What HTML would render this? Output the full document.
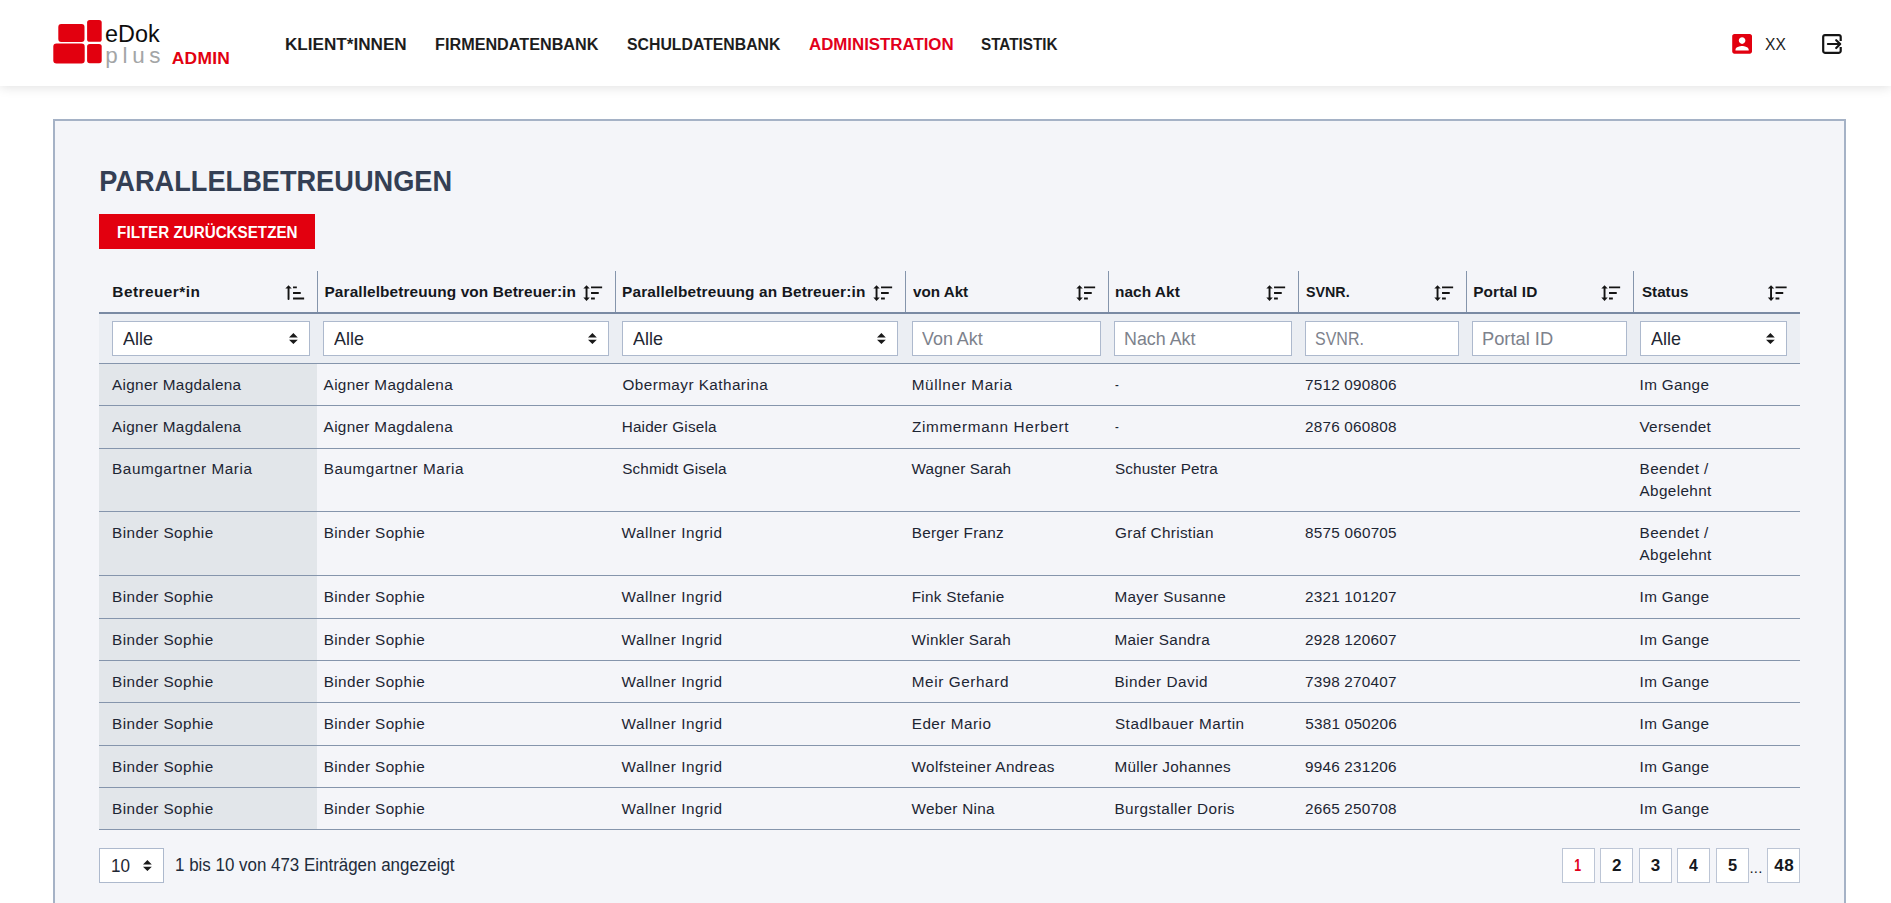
<!DOCTYPE html>
<html lang="de">
<head>
<meta charset="utf-8">
<title>eDok plus ADMIN – Parallelbetreuungen</title>
<style>
*{box-sizing:border-box}
html,body{margin:0;padding:0}
html{width:1891px;height:903px;overflow:hidden;background:#fff}
body{width:1891px;height:903px;overflow:hidden;background:#fff;position:relative;font-family:"Liberation Sans",sans-serif}
.abs{position:absolute}
.t{position:absolute;white-space:nowrap;margin:0;padding:0}
#hdr{position:absolute;left:0;top:0;width:1891px;height:86px;background:#fff;box-shadow:0 1px 11px rgba(0,0,0,.13)}
.lg{position:absolute;background:#e2000f}
#panel{position:absolute;left:53px;top:119px;width:1793px;height:784px;border:2px solid #a5b2c6;border-bottom:0;background:#f4f5f9}
#btn{position:absolute;left:99px;top:214px;width:216px;height:35px;background:#e2000f}
.vs{position:absolute;top:271px;height:42px;width:1px;background:#8595ac}
#thick{position:absolute;left:99px;top:312px;width:1701px;height:2px;background:#7a8aa3}
#frow{position:absolute;left:99px;top:314px;width:1701px;height:49px;background:#ebeef3}
#sorted{position:absolute;left:99px;top:364px;width:218px;height:465px;background:#e2e6ea}
.hl{position:absolute;left:99px;width:1701px;height:1px;background:#8595ac}
.inp{position:absolute;top:321px;height:35px;background:#fff;border:1px solid #adb9cd}
.car{position:absolute;width:8.8px;height:11.1px}
.si{position:absolute;top:285px;width:21px;height:16px}
.pb{position:absolute;top:848px;height:35px;background:#fff;border:1px solid #bcc5d5}
.pg{position:absolute;top:848px;height:35px;line-height:35px;text-align:center;font-size:15.6px;font-weight:700}
</style>
</head>
<body>
<div id="hdr"></div>
<!-- logo -->
<svg class="abs" style="left:50px;top:18px" width="56" height="48" viewBox="50 18 56 48"><g fill="#e2000f"><rect x="58.3" y="24" width="26.2" height="17.9" rx="2.9"/><rect x="87.1" y="20" width="14.6" height="21.8" rx="2.6"/><rect x="53.3" y="43.6" width="31.4" height="19.9" rx="3.2"/><rect x="87.1" y="43.9" width="14.6" height="19.3" rx="2.6"/></g></svg>
<!-- user icon -->
<svg class="abs" style="left:1728px;top:30px" width="28" height="28" viewBox="0 0 28 28"><g transform="translate(0.9 0.7) scale(1.1)"><path fill="#e2000f" d="M3 5v14c0 1.1.89 2 2 2h14c1.1 0 2-.9 2-2V5c0-1.1-.9-2-2-2H5c-1.11 0-2 .9-2 2zm12 4c0 1.66-1.34 3-3 3s-3-1.34-3-3 1.34-3 3-3 3 1.34 3 3zm-9 8c0-2 4-3.1 6-3.1s6 1.1 6 3.1v1H6v-1z"/></g></svg>
<!-- logout icon -->
<svg class="abs" style="left:1822px;top:34px" width="20" height="20" viewBox="0 0 20 20" fill="none" stroke="#141414" stroke-width="2.2" stroke-linejoin="round"><path stroke-linecap="butt" d="M18.7 6.9V2.8a1.7 1.7 0 0 0-1.7-1.7H2.9a1.7 1.7 0 0 0-1.7 1.7v14.3a1.7 1.7 0 0 0 1.7 1.7H17a1.7 1.7 0 0 0 1.7-1.7v-4"/><path stroke-linecap="round" d="M5.9 10h11.6M14.2 6.2l4 3.8-4 4"/></svg>

<div id="panel"></div>
<div id="btn"></div>

<!-- table chrome -->
<div class="vs" style="left:317px"></div>
<div class="vs" style="left:615px"></div>
<div class="vs" style="left:905px"></div>
<div class="vs" style="left:1108px"></div>
<div class="vs" style="left:1298px"></div>
<div class="vs" style="left:1466px"></div>
<div class="vs" style="left:1633px"></div>
<div id="frow"></div>
<div id="thick"></div>
<div id="sorted"></div>
<div class="hl" style="top:363px"></div>
<div class="hl" style="top:405px"></div>
<div class="hl" style="top:448px"></div>
<div class="hl" style="top:511px"></div>
<div class="hl" style="top:575px"></div>
<div class="hl" style="top:618px"></div>
<div class="hl" style="top:660px"></div>
<div class="hl" style="top:702px"></div>
<div class="hl" style="top:745px"></div>
<div class="hl" style="top:787px"></div>
<div class="hl" style="top:829px"></div>


<!-- sort icons -->
<svg class="si" style="left:285px" viewBox="0 0 21 16"><g transform="translate(0.34 0)"><g fill="#141414" stroke="none"><path d="M3.2 0.2L0 3.6h6.4z"/><rect x="2.25" y="2.5" width="1.9" height="12.4" rx=".9"/></g><g stroke="#141414" stroke-width="1.9" stroke-linecap="butt"><path d="M7.7 2.4H11.5M7.7 8H15.4M7.7 13.5H18.8"/></g></g></svg>
<svg class="si" style="left:583px" viewBox="0 0 21 16"><g transform="translate(0.34 0)"><g fill="#141414" stroke="none"><path d="M3.2 0.2L0 3.6h6.4z"/><path d="M3.2 15.9L0 12.4h6.4z"/><rect x="2.25" y="2.5" width="1.9" height="11"/></g><g stroke="#141414" stroke-width="1.9" stroke-linecap="butt"><path d="M7.7 2.4H18.8M7.7 8H15.4M7.7 13.5H11.5"/></g></g></svg>
<svg class="si" style="left:873px" viewBox="0 0 21 16"><g transform="translate(0.34 0)"><g fill="#141414" stroke="none"><path d="M3.2 0.2L0 3.6h6.4z"/><path d="M3.2 15.9L0 12.4h6.4z"/><rect x="2.25" y="2.5" width="1.9" height="11"/></g><g stroke="#141414" stroke-width="1.9" stroke-linecap="butt"><path d="M7.7 2.4H18.8M7.7 8H15.4M7.7 13.5H11.5"/></g></g></svg>
<svg class="si" style="left:1076px" viewBox="0 0 21 16"><g transform="translate(0.34 0)"><g fill="#141414" stroke="none"><path d="M3.2 0.2L0 3.6h6.4z"/><path d="M3.2 15.9L0 12.4h6.4z"/><rect x="2.25" y="2.5" width="1.9" height="11"/></g><g stroke="#141414" stroke-width="1.9" stroke-linecap="butt"><path d="M7.7 2.4H18.8M7.7 8H15.4M7.7 13.5H11.5"/></g></g></svg>
<svg class="si" style="left:1266px" viewBox="0 0 21 16"><g transform="translate(0.34 0)"><g fill="#141414" stroke="none"><path d="M3.2 0.2L0 3.6h6.4z"/><path d="M3.2 15.9L0 12.4h6.4z"/><rect x="2.25" y="2.5" width="1.9" height="11"/></g><g stroke="#141414" stroke-width="1.9" stroke-linecap="butt"><path d="M7.7 2.4H18.8M7.7 8H15.4M7.7 13.5H11.5"/></g></g></svg>
<svg class="si" style="left:1434px" viewBox="0 0 21 16"><g transform="translate(0.34 0)"><g fill="#141414" stroke="none"><path d="M3.2 0.2L0 3.6h6.4z"/><path d="M3.2 15.9L0 12.4h6.4z"/><rect x="2.25" y="2.5" width="1.9" height="11"/></g><g stroke="#141414" stroke-width="1.9" stroke-linecap="butt"><path d="M7.7 2.4H18.8M7.7 8H15.4M7.7 13.5H11.5"/></g></g></svg>
<svg class="si" style="left:1601px" viewBox="0 0 21 16"><g transform="translate(0.34 0)"><g fill="#141414" stroke="none"><path d="M3.2 0.2L0 3.6h6.4z"/><path d="M3.2 15.9L0 12.4h6.4z"/><rect x="2.25" y="2.5" width="1.9" height="11"/></g><g stroke="#141414" stroke-width="1.9" stroke-linecap="butt"><path d="M7.7 2.4H18.8M7.7 8H15.4M7.7 13.5H11.5"/></g></g></svg>
<svg class="si" style="left:1767px" viewBox="0 0 21 16"><g transform="translate(0.84 0)"><g fill="#141414" stroke="none"><path d="M3.2 0.2L0 3.6h6.4z"/><path d="M3.2 15.9L0 12.4h6.4z"/><rect x="2.25" y="2.5" width="1.9" height="11"/></g><g stroke="#141414" stroke-width="1.9" stroke-linecap="butt"><path d="M7.7 2.4H18.8M7.7 8H15.4M7.7 13.5H11.5"/></g></g></svg>


<!-- filter inputs -->
<div class="inp" style="left:112px;width:198px"></div>
<div class="inp" style="left:323px;width:286px"></div>
<div class="inp" style="left:622px;width:276px"></div>
<div class="inp" style="left:912px;width:189px"></div>
<div class="inp" style="left:1114px;width:178px"></div>
<div class="inp" style="left:1305px;width:154px"></div>
<div class="inp" style="left:1472px;width:155px"></div>
<div class="inp" style="left:1640px;width:147px"></div>
<div class="inp" style="left:99px;top:848px;width:65px"></div>
<svg class="car" style="left:289.1px;top:332.8px" viewBox="0 0 4 5"><path fill="#1a1a1a" d="M2 0L0 2h4zm0 5L0 3h4z"/></svg>
<svg class="car" style="left:587.8px;top:332.8px" viewBox="0 0 4 5"><path fill="#1a1a1a" d="M2 0L0 2h4zm0 5L0 3h4z"/></svg>
<svg class="car" style="left:876.9px;top:332.8px" viewBox="0 0 4 5"><path fill="#1a1a1a" d="M2 0L0 2h4zm0 5L0 3h4z"/></svg>
<svg class="car" style="left:1766.1px;top:332.8px" viewBox="0 0 4 5"><path fill="#1a1a1a" d="M2 0L0 2h4zm0 5L0 3h4z"/></svg>
<svg class="car" style="left:143.2px;top:860.1px" viewBox="0 0 4 5"><path fill="#1a1a1a" d="M2 0L0 2h4zm0 5L0 3h4z"/></svg>


<!-- footer -->
<div class="pb" style="left:1562px;width:33px"></div>
<div class="pb" style="left:1600px;width:33px"></div>
<div class="pb" style="left:1639px;width:33px"></div>
<div class="pb" style="left:1677px;width:33px"></div>
<div class="pb" style="left:1716px;width:33px"></div>
<div class="pb" style="left:1767px;width:33px"></div>
<div class="t" style="left:1749.5px;top:858px;font-size:15px;line-height:20px;color:#15181d;letter-spacing:.2px">...</div>


<div class="t" style="left:104.80px;top:17px;font-size:24.2px;line-height:34px;color:#0d0d0d;transform:scaleX(0.9668);transform-origin:1.00px 0;">eDok</div>
<div class="t" style="left:105.30px;top:40px;font-size:22.4px;line-height:31px;color:#a3a5a6;letter-spacing:4.707px;">plus</div>
<div class="t" style="left:171.80px;top:46px;font-size:17.4px;line-height:24px;color:#e2000f;font-weight:700;letter-spacing:0.266px;">ADMIN</div>
<div class="t" style="left:285.10px;top:32px;font-size:17.2px;line-height:24px;color:#1d1d1d;font-weight:700;transform:scaleX(0.9957);transform-origin:1.00px 0;">KLIENT*INNEN</div>
<div class="t" style="left:434.50px;top:32px;font-size:17.2px;line-height:24px;color:#1d1d1d;font-weight:700;transform:scaleX(0.9420);transform-origin:1.00px 0;">FIRMENDATENBANK</div>
<div class="t" style="left:627.00px;top:32px;font-size:17.2px;line-height:24px;color:#1d1d1d;font-weight:700;transform:scaleX(0.9202);transform-origin:0.00px 0;">SCHULDATENBANK</div>
<div class="t" style="left:808.80px;top:32px;font-size:17.2px;line-height:24px;color:#e2001a;font-weight:700;transform:scaleX(0.9792);transform-origin:0.00px 0;">ADMINISTRATION</div>
<div class="t" style="left:981.40px;top:32px;font-size:17.2px;line-height:24px;color:#1d1d1d;font-weight:700;transform:scaleX(0.8879);transform-origin:0.00px 0;">STATISTIK</div>
<div class="t" style="left:1765.10px;top:32px;font-size:17.3px;line-height:24px;color:#1d1d1d;transform:scaleX(0.9011);transform-origin:0.00px 0;">XX</div>
<div class="t" style="left:99.40px;top:159px;font-size:30.4px;line-height:43px;color:#343f54;font-weight:700;transform:scaleX(0.8943);transform-origin:2.00px 0;">PARALLELBETREUUNGEN</div>
<div class="t" style="left:116.70px;top:220px;font-size:17.2px;line-height:24px;color:#ffffff;font-weight:700;transform:scaleX(0.8845);transform-origin:1.00px 0;">FILTER ZURÜCKSETZEN</div>
<div class="t" style="left:112.30px;top:281px;font-size:15.4px;line-height:22px;color:#15181d;font-weight:700;letter-spacing:0.464px;">Betreuer*in</div>
<div class="t" style="left:324.50px;top:281px;font-size:15.4px;line-height:22px;color:#15181d;font-weight:700;letter-spacing:0.106px;">Parallelbetreuung von Betreuer:in</div>
<div class="t" style="left:622.10px;top:281px;font-size:15.4px;line-height:22px;color:#15181d;font-weight:700;letter-spacing:0.148px;">Parallelbetreuung an Betreuer:in</div>
<div class="t" style="left:913.00px;top:281px;font-size:15.4px;line-height:22px;color:#15181d;font-weight:700;transform:scaleX(0.9874);transform-origin:0.00px 0;">von Akt</div>
<div class="t" style="left:1115.00px;top:281px;font-size:15.4px;line-height:22px;color:#15181d;font-weight:700;letter-spacing:0.047px;">nach Akt</div>
<div class="t" style="left:1306.00px;top:281px;font-size:15.4px;line-height:22px;color:#15181d;font-weight:700;transform:scaleX(0.9281);transform-origin:0.00px 0;">SVNR.</div>
<div class="t" style="left:1473.20px;top:281px;font-size:15.4px;line-height:22px;color:#15181d;font-weight:700;letter-spacing:0.104px;">Portal ID</div>
<div class="t" style="left:1641.50px;top:281px;font-size:15.4px;line-height:22px;color:#15181d;font-weight:700;transform:scaleX(0.9854);transform-origin:0.00px 0;">Status</div>
<div class="t" style="left:123.30px;top:326px;font-size:18.6px;line-height:26px;color:#1f2733;transform:scaleX(0.9653);transform-origin:0.00px 0;">Alle</div>
<div class="t" style="left:334.20px;top:326px;font-size:18.6px;line-height:26px;color:#1f2733;transform:scaleX(0.9653);transform-origin:0.00px 0;">Alle</div>
<div class="t" style="left:632.90px;top:326px;font-size:18.6px;line-height:26px;color:#1f2733;transform:scaleX(0.9653);transform-origin:0.00px 0;">Alle</div>
<div class="t" style="left:1650.90px;top:326px;font-size:18.6px;line-height:26px;color:#1f2733;transform:scaleX(0.9653);transform-origin:0.00px 0;">Alle</div>
<div class="t" style="left:921.50px;top:326px;font-size:18.6px;line-height:26px;color:#7d828c;transform:scaleX(0.9627);transform-origin:0.00px 0;">Von Akt</div>
<div class="t" style="left:1124.20px;top:326px;font-size:18.6px;line-height:26px;color:#7d828c;transform:scaleX(0.9605);transform-origin:1.00px 0;">Nach Akt</div>
<div class="t" style="left:1315.00px;top:326px;font-size:18.6px;line-height:26px;color:#7d828c;transform:scaleX(0.8606);transform-origin:0.00px 0;">SVNR.</div>
<div class="t" style="left:1481.90px;top:326px;font-size:18.6px;line-height:26px;color:#7d828c;transform:scaleX(0.9830);transform-origin:1.00px 0;">Portal ID</div>
<div class="t" style="left:112.00px;top:374px;font-size:15.3px;line-height:21px;color:#1d2533;letter-spacing:0.330px;">Aigner Magdalena</div>
<div class="t" style="left:323.60px;top:374px;font-size:15.3px;line-height:21px;color:#1d2533;letter-spacing:0.330px;">Aigner Magdalena</div>
<div class="t" style="left:622.40px;top:374px;font-size:15.3px;line-height:21px;color:#1d2533;letter-spacing:0.446px;">Obermayr Katharina</div>
<div class="t" style="left:911.70px;top:374px;font-size:15.3px;line-height:21px;color:#1d2533;letter-spacing:0.646px;">Müllner Maria</div>
<div class="t" style="left:1114.80px;top:374px;font-size:15.3px;line-height:21px;color:#1d2533;transform:scaleX(0.7400);transform-origin:0.00px 0;">-</div>
<div class="t" style="left:1305.00px;top:374px;font-size:15.3px;line-height:21px;color:#1d2533;letter-spacing:0.218px;">7512 090806</div>
<div class="t" style="left:1639.60px;top:374px;font-size:15.3px;line-height:21px;color:#1d2533;letter-spacing:0.305px;">Im Gange</div>
<div class="t" style="left:112.00px;top:416px;font-size:15.3px;line-height:21px;color:#1d2533;letter-spacing:0.330px;">Aigner Magdalena</div>
<div class="t" style="left:323.60px;top:416px;font-size:15.3px;line-height:21px;color:#1d2533;letter-spacing:0.330px;">Aigner Magdalena</div>
<div class="t" style="left:621.70px;top:416px;font-size:15.3px;line-height:21px;color:#1d2533;letter-spacing:0.178px;">Haider Gisela</div>
<div class="t" style="left:912.00px;top:416px;font-size:15.3px;line-height:21px;color:#1d2533;letter-spacing:0.659px;">Zimmermann Herbert</div>
<div class="t" style="left:1114.80px;top:416px;font-size:15.3px;line-height:21px;color:#1d2533;transform:scaleX(0.7400);transform-origin:0.00px 0;">-</div>
<div class="t" style="left:1305.00px;top:416px;font-size:15.3px;line-height:21px;color:#1d2533;letter-spacing:0.218px;">2876 060808</div>
<div class="t" style="left:1639.40px;top:416px;font-size:15.3px;line-height:21px;color:#1d2533;letter-spacing:0.320px;">Versendet</div>
<div class="t" style="left:112.10px;top:458px;font-size:15.3px;line-height:21px;color:#1d2533;letter-spacing:0.555px;">Baumgartner Maria</div>
<div class="t" style="left:323.70px;top:458px;font-size:15.3px;line-height:21px;color:#1d2533;letter-spacing:0.555px;">Baumgartner Maria</div>
<div class="t" style="left:622.20px;top:458px;font-size:15.3px;line-height:21px;color:#1d2533;letter-spacing:0.119px;">Schmidt Gisela</div>
<div class="t" style="left:911.60px;top:458px;font-size:15.3px;line-height:21px;color:#1d2533;letter-spacing:0.131px;">Wagner Sarah</div>
<div class="t" style="left:1114.90px;top:458px;font-size:15.3px;line-height:21px;color:#1d2533;letter-spacing:0.133px;">Schuster Petra</div>
<div class="t" style="left:1639.60px;top:458px;font-size:15.3px;line-height:21px;color:#1d2533;letter-spacing:0.408px;">Beendet /</div>
<div class="t" style="left:1639.50px;top:480px;font-size:15.3px;line-height:21px;color:#1d2533;letter-spacing:0.369px;">Abgelehnt</div>
<div class="t" style="left:112.10px;top:522px;font-size:15.3px;line-height:21px;color:#1d2533;letter-spacing:0.417px;">Binder Sophie</div>
<div class="t" style="left:323.70px;top:522px;font-size:15.3px;line-height:21px;color:#1d2533;letter-spacing:0.417px;">Binder Sophie</div>
<div class="t" style="left:621.60px;top:522px;font-size:15.3px;line-height:21px;color:#1d2533;letter-spacing:0.508px;">Wallner Ingrid</div>
<div class="t" style="left:911.70px;top:522px;font-size:15.3px;line-height:21px;color:#1d2533;letter-spacing:0.253px;">Berger Franz</div>
<div class="t" style="left:1115.10px;top:522px;font-size:15.3px;line-height:21px;color:#1d2533;letter-spacing:0.304px;">Graf Christian</div>
<div class="t" style="left:1305.10px;top:522px;font-size:15.3px;line-height:21px;color:#1d2533;letter-spacing:0.218px;">8575 060705</div>
<div class="t" style="left:1639.60px;top:522px;font-size:15.3px;line-height:21px;color:#1d2533;letter-spacing:0.408px;">Beendet /</div>
<div class="t" style="left:1639.50px;top:544px;font-size:15.3px;line-height:21px;color:#1d2533;letter-spacing:0.369px;">Abgelehnt</div>
<div class="t" style="left:112.10px;top:586px;font-size:15.3px;line-height:21px;color:#1d2533;letter-spacing:0.417px;">Binder Sophie</div>
<div class="t" style="left:323.70px;top:586px;font-size:15.3px;line-height:21px;color:#1d2533;letter-spacing:0.417px;">Binder Sophie</div>
<div class="t" style="left:621.60px;top:586px;font-size:15.3px;line-height:21px;color:#1d2533;letter-spacing:0.508px;">Wallner Ingrid</div>
<div class="t" style="left:911.70px;top:586px;font-size:15.3px;line-height:21px;color:#1d2533;letter-spacing:0.269px;">Fink Stefanie</div>
<div class="t" style="left:1114.40px;top:586px;font-size:15.3px;line-height:21px;color:#1d2533;letter-spacing:0.347px;">Mayer Susanne</div>
<div class="t" style="left:1305.00px;top:586px;font-size:15.3px;line-height:21px;color:#1d2533;letter-spacing:0.218px;">2321 101207</div>
<div class="t" style="left:1639.60px;top:586px;font-size:15.3px;line-height:21px;color:#1d2533;letter-spacing:0.305px;">Im Gange</div>
<div class="t" style="left:112.10px;top:629px;font-size:15.3px;line-height:21px;color:#1d2533;letter-spacing:0.417px;">Binder Sophie</div>
<div class="t" style="left:323.70px;top:629px;font-size:15.3px;line-height:21px;color:#1d2533;letter-spacing:0.417px;">Binder Sophie</div>
<div class="t" style="left:621.60px;top:629px;font-size:15.3px;line-height:21px;color:#1d2533;letter-spacing:0.508px;">Wallner Ingrid</div>
<div class="t" style="left:911.60px;top:629px;font-size:15.3px;line-height:21px;color:#1d2533;letter-spacing:0.254px;">Winkler Sarah</div>
<div class="t" style="left:1114.40px;top:629px;font-size:15.3px;line-height:21px;color:#1d2533;letter-spacing:0.316px;">Maier Sandra</div>
<div class="t" style="left:1305.00px;top:629px;font-size:15.3px;line-height:21px;color:#1d2533;letter-spacing:0.218px;">2928 120607</div>
<div class="t" style="left:1639.60px;top:629px;font-size:15.3px;line-height:21px;color:#1d2533;letter-spacing:0.305px;">Im Gange</div>
<div class="t" style="left:112.10px;top:671px;font-size:15.3px;line-height:21px;color:#1d2533;letter-spacing:0.417px;">Binder Sophie</div>
<div class="t" style="left:323.70px;top:671px;font-size:15.3px;line-height:21px;color:#1d2533;letter-spacing:0.417px;">Binder Sophie</div>
<div class="t" style="left:621.60px;top:671px;font-size:15.3px;line-height:21px;color:#1d2533;letter-spacing:0.508px;">Wallner Ingrid</div>
<div class="t" style="left:911.70px;top:671px;font-size:15.3px;line-height:21px;color:#1d2533;letter-spacing:0.600px;">Meir Gerhard</div>
<div class="t" style="left:1114.40px;top:671px;font-size:15.3px;line-height:21px;color:#1d2533;letter-spacing:0.512px;">Binder David</div>
<div class="t" style="left:1305.00px;top:671px;font-size:15.3px;line-height:21px;color:#1d2533;letter-spacing:0.218px;">7398 270407</div>
<div class="t" style="left:1639.60px;top:671px;font-size:15.3px;line-height:21px;color:#1d2533;letter-spacing:0.305px;">Im Gange</div>
<div class="t" style="left:112.10px;top:713px;font-size:15.3px;line-height:21px;color:#1d2533;letter-spacing:0.417px;">Binder Sophie</div>
<div class="t" style="left:323.70px;top:713px;font-size:15.3px;line-height:21px;color:#1d2533;letter-spacing:0.417px;">Binder Sophie</div>
<div class="t" style="left:621.60px;top:713px;font-size:15.3px;line-height:21px;color:#1d2533;letter-spacing:0.508px;">Wallner Ingrid</div>
<div class="t" style="left:911.70px;top:713px;font-size:15.3px;line-height:21px;color:#1d2533;letter-spacing:0.488px;">Eder Mario</div>
<div class="t" style="left:1114.90px;top:713px;font-size:15.3px;line-height:21px;color:#1d2533;letter-spacing:0.529px;">Stadlbauer Martin</div>
<div class="t" style="left:1305.30px;top:713px;font-size:15.3px;line-height:21px;color:#1d2533;letter-spacing:0.218px;">5381 050206</div>
<div class="t" style="left:1639.60px;top:713px;font-size:15.3px;line-height:21px;color:#1d2533;letter-spacing:0.305px;">Im Gange</div>
<div class="t" style="left:112.10px;top:756px;font-size:15.3px;line-height:21px;color:#1d2533;letter-spacing:0.417px;">Binder Sophie</div>
<div class="t" style="left:323.70px;top:756px;font-size:15.3px;line-height:21px;color:#1d2533;letter-spacing:0.417px;">Binder Sophie</div>
<div class="t" style="left:621.60px;top:756px;font-size:15.3px;line-height:21px;color:#1d2533;letter-spacing:0.508px;">Wallner Ingrid</div>
<div class="t" style="left:911.60px;top:756px;font-size:15.3px;line-height:21px;color:#1d2533;letter-spacing:0.344px;">Wolfsteiner Andreas</div>
<div class="t" style="left:1114.40px;top:756px;font-size:15.3px;line-height:21px;color:#1d2533;letter-spacing:0.294px;">Müller Johannes</div>
<div class="t" style="left:1305.00px;top:756px;font-size:15.3px;line-height:21px;color:#1d2533;letter-spacing:0.218px;">9946 231206</div>
<div class="t" style="left:1639.60px;top:756px;font-size:15.3px;line-height:21px;color:#1d2533;letter-spacing:0.305px;">Im Gange</div>
<div class="t" style="left:112.10px;top:798px;font-size:15.3px;line-height:21px;color:#1d2533;letter-spacing:0.417px;">Binder Sophie</div>
<div class="t" style="left:323.70px;top:798px;font-size:15.3px;line-height:21px;color:#1d2533;letter-spacing:0.417px;">Binder Sophie</div>
<div class="t" style="left:621.60px;top:798px;font-size:15.3px;line-height:21px;color:#1d2533;letter-spacing:0.508px;">Wallner Ingrid</div>
<div class="t" style="left:911.60px;top:798px;font-size:15.3px;line-height:21px;color:#1d2533;letter-spacing:0.258px;">Weber Nina</div>
<div class="t" style="left:1114.40px;top:798px;font-size:15.3px;line-height:21px;color:#1d2533;letter-spacing:0.437px;">Burgstaller Doris</div>
<div class="t" style="left:1305.00px;top:798px;font-size:15.3px;line-height:21px;color:#1d2533;letter-spacing:0.218px;">2665 250708</div>
<div class="t" style="left:1639.60px;top:798px;font-size:15.3px;line-height:21px;color:#1d2533;letter-spacing:0.305px;">Im Gange</div>
<div class="t" style="left:110.60px;top:853px;font-size:18.6px;line-height:26px;color:#1f2733;transform:scaleX(0.9203);transform-origin:1.00px 0;">10</div>
<div class="t" style="left:175.10px;top:853px;font-size:17.5px;line-height:24px;color:#212b3a;transform:scaleX(0.9674);transform-origin:1.00px 0;">1 bis 10 von 473 Einträgen angezeigt</div>
<div class="t" style="left:1573.60px;top:854px;font-size:17px;line-height:24px;color:#e2001a;font-weight:700;transform:scaleX(0.7250);transform-origin:1.00px 0;">1</div>
<div class="t" style="left:1612.10px;top:854px;font-size:17px;line-height:24px;color:#15181d;font-weight:700;">2</div>
<div class="t" style="left:1650.70px;top:854px;font-size:17px;line-height:24px;color:#15181d;font-weight:700;">3</div>
<div class="t" style="left:1688.90px;top:854px;font-size:17px;line-height:24px;color:#15181d;font-weight:700;transform:scaleX(0.9300);transform-origin:0.00px 0;">4</div>
<div class="t" style="left:1727.70px;top:854px;font-size:17px;line-height:24px;color:#15181d;font-weight:700;transform:scaleX(0.9667);transform-origin:0.00px 0;">5</div>
<div class="t" style="left:1774.20px;top:854px;font-size:17px;line-height:24px;color:#15181d;font-weight:700;letter-spacing:0.645px;">48</div>
</body>
</html>
